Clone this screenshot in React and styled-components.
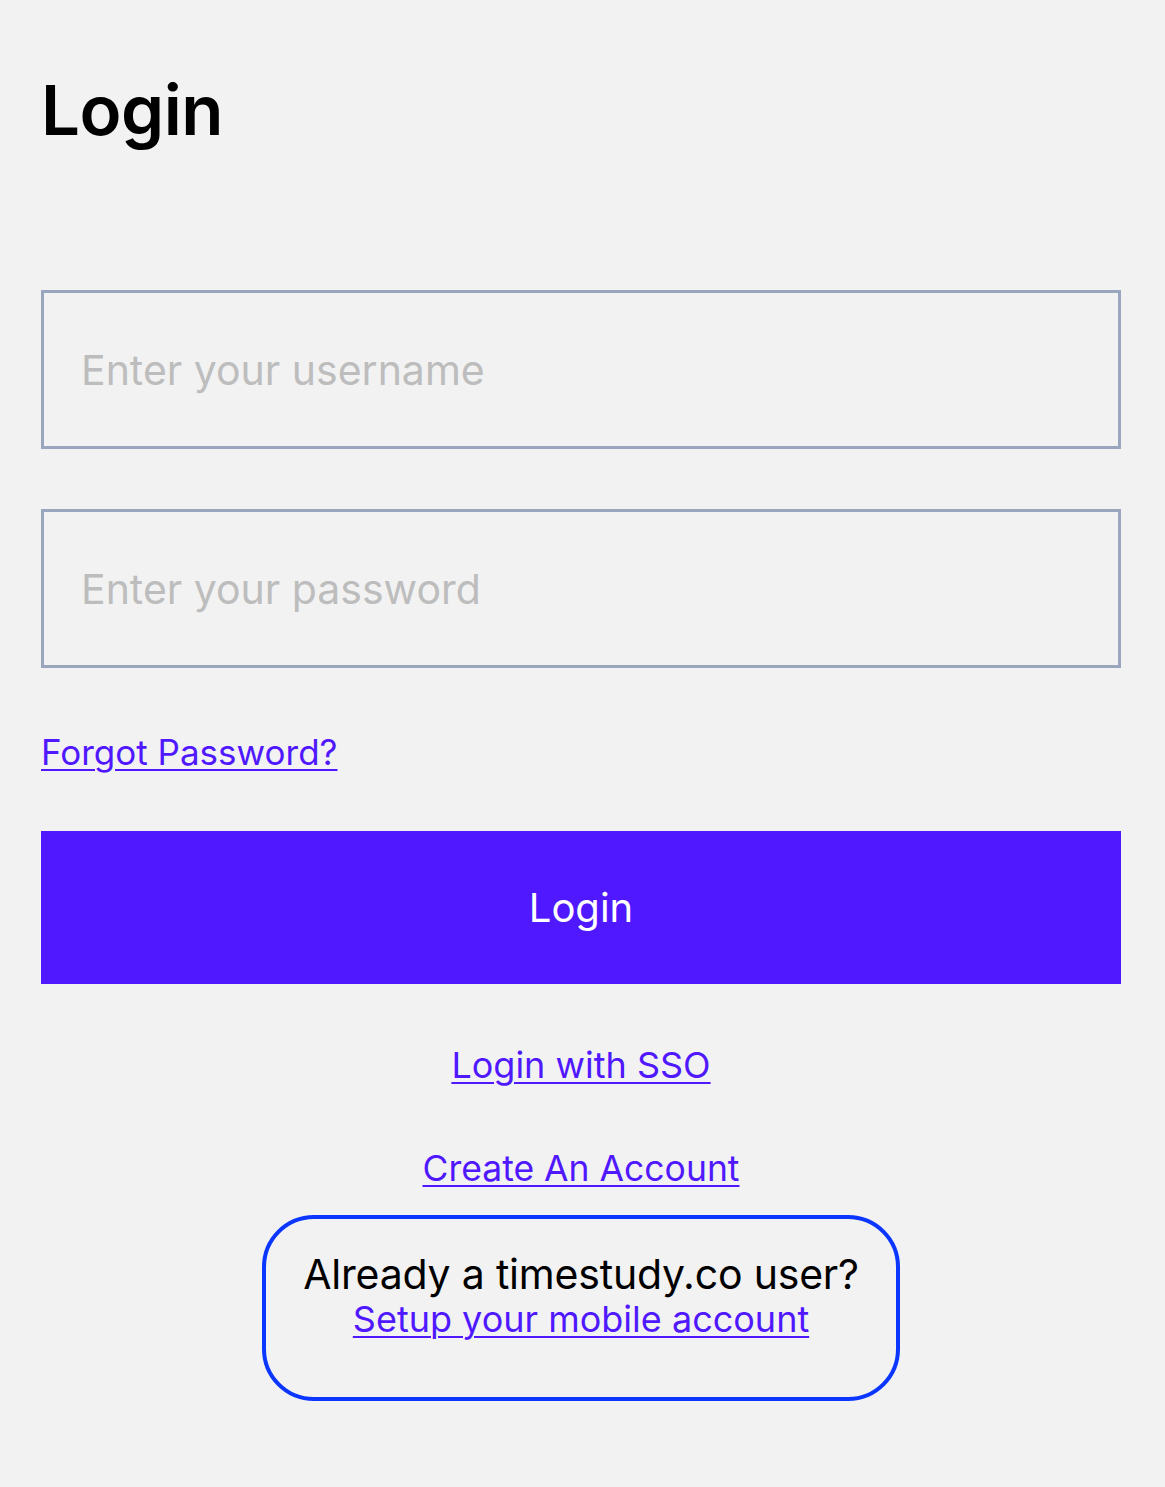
import React from "react";
import styled, { createGlobalStyle } from "styled-components";

const GlobalStyle = createGlobalStyle`
  html, body {
    margin: 0;
    padding: 0;
    background: #f2f2f2;
  }
  body {
    font-family: Inter, "Noto Sans", sans-serif;
    color: #000;
  }
`;

const Page = styled.main`
  min-height: 1487px;
  box-sizing: border-box;
  padding: 72px 44px 0 41px;
  display: flex;
  flex-direction: column;
`;

const Title = styled.h1`
  margin: 0 0 142px;
  font-size: 69px;
  font-weight: 600;
  line-height: 76px;
  letter-spacing: -0.5px;
`;

const Field = styled.input`
  box-sizing: border-box;
  width: 100%;
  height: 159px;
  margin: 0 0 60px;
  padding: 0 37px;
  border: 3px solid #9aa5be;
  border-radius: 0;
  background: transparent;
  font-family: inherit;
  font-size: 41px;
  color: #000;
  outline: none;

  &::placeholder {
    color: #bdbdbd;
  }
`;

const TextLink = styled.a`
  color: #5018ff;
  font-size: ${(p) => p.$size || 35}px;
  line-height: 44px;
  text-decoration: underline;
  text-underline-offset: 4px;
  text-decoration-thickness: 2px;
  cursor: pointer;
  align-self: ${(p) => (p.$center ? "center" : "flex-start")};
  margin: ${(p) => p.$margin || "0"};
`;

const LoginButton = styled.button`
  width: 100%;
  height: 153px;
  border: none;
  background: #5018ff;
  color: #fff;
  font-family: inherit;
  font-size: 40px;
  cursor: pointer;
  margin-top: 57px;
`;

const Callout = styled.div`
  align-self: center;
  box-sizing: border-box;
  width: 638px;
  height: 186px;
  margin-top: 24px;
  border: 4px solid #0a36ff;
  border-radius: 52px;
  padding-top: 30px;
  display: flex;
  flex-direction: column;
  align-items: center;
`;

const CalloutText = styled.p`
  margin: 0;
  font-size: 41px;
  line-height: 50px;
  letter-spacing: -0.2px;
`;

const CalloutLink = styled(TextLink)`
  line-height: 40px;
  align-self: center;
`;

export default function App() {
  return (
    <>
      <GlobalStyle />
      <Page>
        <Title>Login</Title>
        <Field type="text" placeholder="Enter your username" />
        <Field type="password" placeholder="Enter your password" />
        <TextLink $margin="2px 0 0">Forgot Password?</TextLink>
        <LoginButton>Login</LoginButton>
        <TextLink $center $size={36} $margin="59px 0 0">Login with SSO</TextLink>
        <TextLink $center $size={35.5} $margin="60px 0 0">Create An Account</TextLink>
        <Callout>
          <CalloutText>Already a timestudy.co user?</CalloutText>
          <CalloutLink $size={36}>Setup your mobile account</CalloutLink>
        </Callout>
      </Page>
    </>
  );
}
